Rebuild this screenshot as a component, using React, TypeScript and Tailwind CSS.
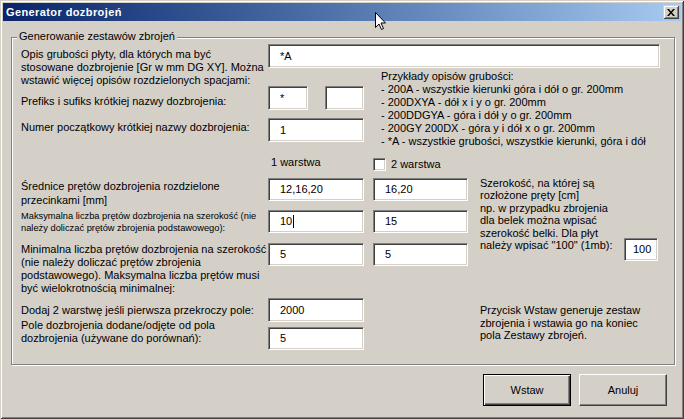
import type { ReactNode } from 'react';

// ramka "wklęsła" jak w klasycznym Windows
const SUNKEN =
  'bg-white border border-t-[#808080] border-l-[#808080] border-b-white border-r-white shadow-[inset_1px_1px_0_#404040,inset_-1px_-1px_0_#d4d0c8]';

function Pole({
  children,
  className = '',
  pad = 'pl-[11px]',
}: {
  children?: ReactNode;
  className?: string;
  pad?: string;
}) {
  return (
    <div className={`${SUNKEN} flex items-center whitespace-nowrap ${pad} ${className}`}>
      {children}
    </div>
  );
}

function Przycisk({ label, domyslny }: { label: string; domyslny?: boolean }) {
  const ramka = domyslny
    ? 'border border-black shadow-[inset_1px_1px_0_#fff,inset_-1px_-1px_0_#404040,inset_-2px_-2px_0_#808080]'
    : 'border border-t-white border-l-white border-b-[#404040] border-r-[#404040] shadow-[inset_-1px_-1px_0_#808080]';
  return (
    <button className={`w-[88px] h-[32px] bg-[#d4d0c8] flex items-center justify-center ${ramka}`}>
      {label}
    </button>
  );
}

export default function App() {
  return (
    <div className="relative w-[684px] h-[419px] overflow-hidden bg-[#d4d0c8] p-[3px] text-[11px] text-black font-['Liberation_Sans',Arial,sans-serif] shadow-[inset_1px_1px_0_#d4d0c8,inset_-1px_-1px_0_#404040,inset_2px_2px_0_#fff,inset_-2px_-2px_0_#808080]">
      {/* Pasek tytułu */}
      <div className="h-[18px] flex items-center justify-between px-[2px] bg-linear-to-r from-[#0a246a] to-[#a6caf0]">
        <span className="text-white font-bold tracking-[0.4px] ml-[1px]">Generator dozbrojeń</span>
        <div className="w-[16px] h-[14px] bg-[#d4d0c8] flex items-center justify-center shadow-[inset_1px_1px_0_#d4d0c8,inset_-1px_-1px_0_#404040,inset_2px_2px_0_#fff,inset_-2px_-2px_0_#808080]">
          <svg width="8" height="7" viewBox="0 0 8 7">
            <path d="M0 0h2l2 2.5L6 0h2L5 3.5 8 7H6L4 4.5 2 7H0l3-3.5z" fill="#000" />
          </svg>
        </div>
      </div>

      {/* Grupa */}
      <div className="relative ml-[8px] mt-[16px] w-[664px] h-[328px] border border-[#808080] shadow-[1px_1px_0_#fff,inset_1px_1px_0_#fff]">
        <span className="absolute left-[5px] top-[-8px] px-[2px] bg-[#d4d0c8] leading-[13px]">
          Generowanie zestawów zbrojeń
        </span>

        <div className="pt-[6px] pl-[9px] whitespace-nowrap">
          {/* Opis grubości / prefiks / numer */}
          <div className="h-[104px] flex">
            <div className="w-[247px] flex flex-col leading-[13px]">
              <p className="mt-[4px]">
                Opis grubości płyty, dla których ma być
                <br />
                stosowane dozbrojenie [Gr w mm DG XY]. Można
                <br />
                wstawić więcej opisów rozdzielonych spacjami:
              </p>
              <p className="mt-[8px]">Prefiks i sufiks krótkiej nazwy dozbrojenia:</p>
              <p className="mt-[13px]">Numer początkowy krótkiej nazwy dozbrojenia:</p>
            </div>
            <div className="flex flex-col">
              <Pole className="w-[392px] h-[24px]">*A</Pole>
              <div className="flex">
                <div className="w-[113px] flex flex-col">
                  <div className="mt-[18px] flex gap-[17px]">
                    <Pole className="w-[40px] h-[24px]">*</Pole>
                    <Pole className="w-[39px] h-[24px]" />
                  </div>
                  <Pole className="mt-[8px] w-[96px] h-[24px]">1</Pole>
                </div>
                <p className="mt-[2px] leading-[13px]">
                  Przykłady opisów grubości:
                  <br />- 200A - wszystkie kierunki góra i dół o gr. 200mm
                  <br />- 200DXYA - dół x i y o gr. 200mm
                  <br />- 200DDGYA - góra i dół y o gr. 200mm
                  <br />- 200GY 200DX - góra y i dół x o gr. 200mm
                  <br />- *A - wszystkie grubości, wszystkie kierunki, góra i dół
                </p>
              </div>
            </div>
          </div>

          {/* Warstwy */}
          <div className="h-[30px] flex items-start leading-[13px]">
            <span className="ml-[250px] mt-[8px] w-[102px]">1 warstwa</span>
            <div className={`${SUNKEN} mt-[10px] w-[13px] h-[13px]`} />
            <span className="ml-[5px] mt-[10px]">2 warstwa</span>
          </div>

          {/* Pręty */}
          <div className="h-[117px] flex">
            <div className="w-[247px] flex flex-col">
              <p className="mt-[1px] leading-[14px]">
                Średnice prętów dozbrojenia rozdzielone
                <br />
                przecinkami [mm]
              </p>
              <p className="mt-[4px] text-[9.3px] leading-[11.5px]">
                Maksymalna liczba prętów dozbrojenia na szerokość (nie
                <br />
                należy doliczać prętów zbrojenia podstawowego):
              </p>
              <p className="mt-[9px] leading-[13px]">
                Minimalna liczba prętów dozbrojenia na szerokość
                <br />
                (nie należy doliczać prętów zbrojenia
                <br />
                podstawowego). Maksymalna liczba prętów musi
                <br />
                być wielokrotnością minimalnej:
              </p>
            </div>
            <div className="w-[96px] flex flex-col">
              <Pole className="h-[23px]">12,16,20</Pole>
              <Pole className="mt-[9px] h-[23px]">
                10
                <span className="inline-block w-px h-[13px] bg-black ml-[1px]" />
              </Pole>
              <Pole className="mt-[10px] h-[23px]">5</Pole>
            </div>
            <div className="ml-[9px] w-[95px] flex flex-col">
              <Pole className="h-[23px]">16,20</Pole>
              <Pole className="mt-[9px] h-[23px]">15</Pole>
              <Pole className="mt-[10px] h-[23px]">5</Pole>
            </div>
            <div className="ml-[12px] flex">
              <p className="w-[144px] mt-[-1px] leading-[12.4px]">
                Szerokość, na której są
                <br />
                rozłożone pręty [cm]
                <br />
                np. w przypadku zbrojenia
                <br />
                dla belek można wpisać
                <br />
                szerokość belki. Dla płyt
                <br />
                należy wpisać "100" (1mb):
              </p>
              <Pole className="mt-[60px] w-[34px] h-[23px]" pad="pl-[8px]">
                100
              </Pole>
            </div>
          </div>

          {/* Pole dozbrojenia */}
          <div className="flex">
            <div className="w-[247px] flex flex-col leading-[13px]">
              <p className="mt-[8.5px]">Dodaj 2 warstwę jeśli pierwsza przekroczy pole:</p>
              <p className="mt-[2px]">
                Pole dozbrojenia dodane/odjęte od pola
                <br />
                dozbrojenia (używane do porównań):
              </p>
            </div>
            <div className="w-[96px] flex flex-col">
              <Pole className="mt-[3px] h-[24px]">2000</Pole>
              <Pole className="mt-[5px] h-[23px]">5</Pole>
            </div>
            <p className="ml-[116px] mt-[9px] leading-[12.5px]">
              Przycisk Wstaw generuje zestaw
              <br />
              zbrojenia i wstawia go na koniec
              <br />
              pola Zestawy zbrojeń.
            </p>
          </div>
        </div>
      </div>

      {/* Przyciski */}
      <div className="mt-[9px] pr-[14px] flex justify-end gap-[8px]">
        <Przycisk label="Wstaw" domyslny />
        <Przycisk label="Anuluj" />
      </div>

      {/* Kursor myszy */}
      <svg className="absolute left-[375px] top-[12px]" width="12" height="19" viewBox="0 0 12 19">
        <path
          d="M0.5 0.5V15.5L4 12L6.5 17.5L8.5 16.5L6 11H10.5Z"
          fill="#fff"
          stroke="#000"
          strokeWidth="1"
          strokeLinejoin="miter"
        />
      </svg>
    </div>
  );
}
